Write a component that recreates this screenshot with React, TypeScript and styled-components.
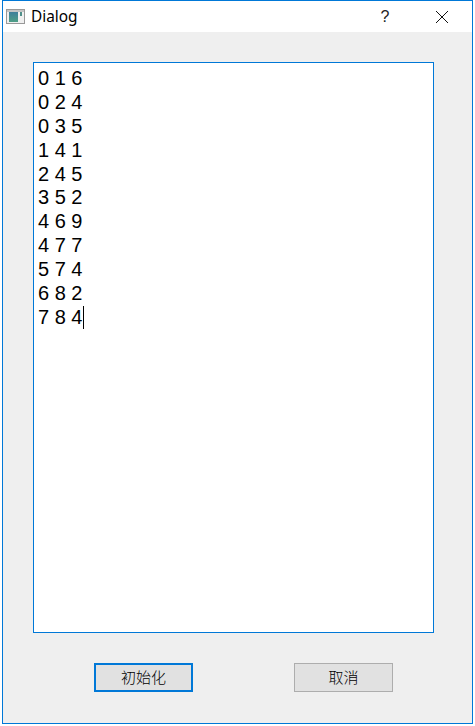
import React from "react";
import styled, { createGlobalStyle } from "styled-components";

const rows = ["0 1 6", "0 2 4", "0 3 5", "1 4 1", "2 4 5", "3 5 2", "4 6 9", "4 7 7", "5 7 4", "6 8 2", "7 8 4"];

const GlobalStyle = createGlobalStyle`
  html, body {
    margin: 0;
    padding: 0;
    background: #ffffff;
  }
`;

const Page = styled.div`
  width: 475px;
  height: 726px;
  padding-left: 2px;
  box-sizing: border-box;
  overflow: hidden;
`;

const Window = styled.div`
  width: 471px;
  height: 724px;
  box-sizing: border-box;
  border: 1px solid #0078d7;
  background: #efefef;
  display: flex;
  flex-direction: column;
  font-family: "Liberation Sans", "Noto Sans CJK SC", sans-serif;
`;

const TitleBar = styled.div`
  height: 31px;
  background: #ffffff;
  display: flex;
  align-items: center;
  padding-left: 3px;
`;

const Title = styled.span`
  margin-left: 5px;
  margin-top: -1px;
  font-family: "Noto Sans", "Liberation Sans", sans-serif;
  font-size: 15.4px;
  color: #000000;
`;

const HelpMark = styled.span`
  margin-left: auto;
  width: 46px;
  text-align: center;
  font-family: "Liberation Sans", sans-serif;
  font-size: 16px;
  color: #222222;
`;

const CloseButton = styled.div`
  width: 46px;
  margin-left: 11px;
  margin-right: 7px;
  display: flex;
  justify-content: center;
`;

const Content = styled.div`
  flex: 1;
  padding: 30px 38px 31px 30px;
  display: flex;
  flex-direction: column;
`;

const TextBox = styled.div`
  height: 571px;
  box-sizing: border-box;
  border: 1px solid #0078d7;
  background: #ffffff;
  padding: 4px 4px;
  font-size: 20px;
  line-height: 23.9px;
  color: #000000;
`;

const Row = styled.div`
  display: flex;
  align-items: center;
  height: 23.9px;
`;

const Caret = styled.span`
  width: 1px;
  height: 23px;
  margin-left: 1px;
  background: #000000;
`;

const Buttons = styled.div`
  display: flex;
  margin-top: 30px;
  padding-left: 61px;
  gap: 101px;
`;

const Button = styled.button<{ $focused?: boolean }>`
  width: 99px;
  height: 29px;
  box-sizing: border-box;
  padding: 0 0 2px;
  background: #e1e1e1;
  border: ${(props) => (props.$focused ? "2px solid #0078d7" : "1px solid #adadad")};
  font-family: "Noto Sans CJK SC", sans-serif;
  font-size: 15px;
  font-weight: 300;
  color: #000000;
`;

const AppIcon = () => (
  <svg width="20" height="16" viewBox="0 0 20 16">
    <defs>
      <linearGradient id="pane" x1="0" y1="0" x2="0" y2="1">
        <stop offset="0" stopColor="#3f7f9c" />
        <stop offset="1" stopColor="#4f9f86" />
      </linearGradient>
    </defs>
    <rect x="0.5" y="0.5" width="18" height="14" fill="#f0f0f0" stroke="#999999" />
    <rect x="1" y="1" width="17" height="2" fill="#c4c4c4" />
    <rect x="3" y="3" width="9" height="10" fill="url(#pane)" />
    <rect x="14" y="3" width="2" height="4" fill="#4f8f8a" />
  </svg>
);

const CloseIcon = () => (
  <svg width="14" height="14" viewBox="0 0 14 14">
    <path d="M1 1 L13 13 M13 1 L1 13" stroke="#111111" strokeWidth="1" fill="none" />
  </svg>
);

const App = () => {
  return (
    <Page>
      <GlobalStyle />
      <Window>
        <TitleBar>
          <AppIcon />
          <Title>Dialog</Title>
          <HelpMark>?</HelpMark>
          <CloseButton>
            <CloseIcon />
          </CloseButton>
        </TitleBar>
        <Content>
          <TextBox>
            {rows.map((row, i) => (
              <Row key={i}>
                {row}
                {i === rows.length - 1 && <Caret />}
              </Row>
            ))}
          </TextBox>
          <Buttons>
            <Button $focused>初始化</Button>
            <Button>取消</Button>
          </Buttons>
        </Content>
      </Window>
    </Page>
  );
};

export default App;
